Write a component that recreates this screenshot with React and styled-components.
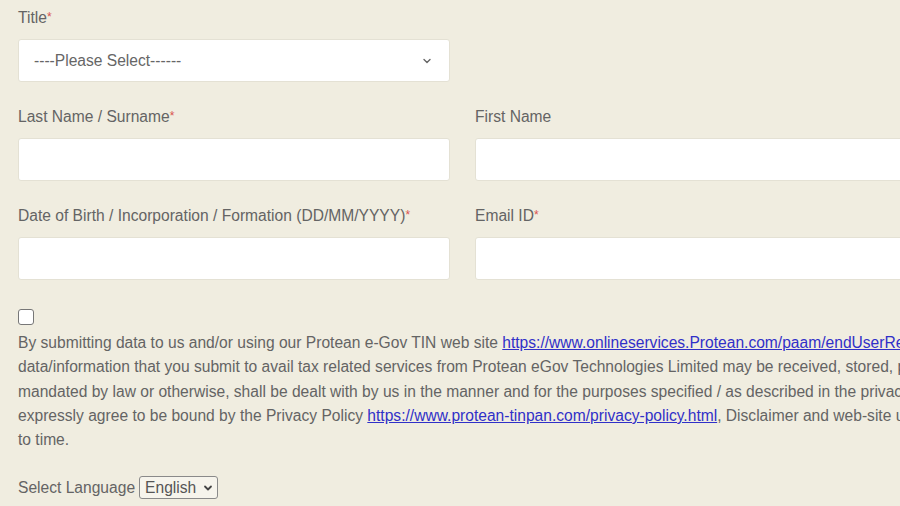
import React from "react";
import styled, { createGlobalStyle } from "styled-components";

const Global = createGlobalStyle`
  html, body { margin: 0; padding: 0; }
  body {
    background: #f0ede0;
    overflow: hidden;
    font-family: "Liberation Sans", Arial, sans-serif;
  }
`;

const Page = styled.div`
  width: 1500px;
  padding: 8px 0 0 18px;
  color: #646464;
  font-size: 15.6px;
`;

const Grid = styled.div`
  display: grid;
  grid-template-columns: 432px 432px;
  column-gap: 25px;
  row-gap: 25px;
`;

const Field = styled.div`
  display: flex;
  flex-direction: column;
`;

const Label = styled.label`
  font-size: 15.6px;
  line-height: 20px;
  color: #646464;
  margin-bottom: 11px;
  padding-top: 1px;
  margin-top: -1px;
`;

const Req = styled.span`
  color: #d9534f;
  font-size: 12px;
  vertical-align: top;
  position: relative;
  top: -1px;
`;

const Box = styled.div`
  height: 43px;
  box-sizing: border-box;
  background: #fff;
  border: 1px solid #e4e1d4;
  border-radius: 3px;
  display: flex;
  align-items: center;
  justify-content: space-between;
  padding: 0 17px 0 15px;
  color: #666;
  font-size: 15.6px;
`;

const Check = styled.div`
  width: 14px;
  height: 14px;
  border: 1px solid #777;
  border-radius: 3px;
  background: #fff;
  margin-top: 29px;
`;

const Para = styled.p`
  margin: 6px 0 0;
  font-size: 15.6px;
  line-height: 24.25px;
  white-space: nowrap;
  color: #646464;
`;

const Link = styled.a`
  color: #3030c8;
  text-decoration: underline;
`;

const LangRow = styled.div`
  margin-top: 24px;
  display: flex;
  align-items: center;
  gap: 4px;
  font-size: 15.6px;
  color: #646464;
`;

const LangSelect = styled.div`
  height: 23px;
  box-sizing: border-box;
  border: 1px solid #8a8a8a;
  border-radius: 3px;
  background: #f6f4ec;
  display: flex;
  align-items: center;
  gap: 7px;
  padding: 0 4px 0 5px;
  font-size: 15.6px;
  color: #555;
`;

const Chevron = ({ size = 10, stroke = "#777", width = 1.6 }) => (
  <svg width={size} height={size} viewBox="0 0 10 10">
    <path d="M2 3.5 L5 6.5 L8 3.5" fill="none" stroke={stroke} strokeWidth={width} strokeLinecap="round" strokeLinejoin="round" />
  </svg>
);

export default function App() {
  return (
    <>
      <Global />
      <Page>
        <Grid>
          <Field>
            <Label>Title<Req>*</Req></Label>
            <Box>
              <span>----Please Select------</span>
              <Chevron size={10} stroke="#666" width={1.4} />
            </Box>
          </Field>
          <div />
          <Field>
            <Label>Last Name / Surname<Req>*</Req></Label>
            <Box />
          </Field>
          <Field>
            <Label>First Name</Label>
            <Box />
          </Field>
          <Field>
            <Label>Date of Birth / Incorporation / Formation (DD/MM/YYYY)<Req>*</Req></Label>
            <Box />
          </Field>
          <Field>
            <Label>Email ID<Req>*</Req></Label>
            <Box />
          </Field>
        </Grid>
        <Check />
        <Para>
          By submitting data to us and/or using our Protean e-Gov TIN web site{" "}
          <Link href="#">https://www.onlineservices.Protean.com/paam/endUserRegisterContact.html</Link> you give your consent that all personal
          <br />
          data/information that you submit to avail tax related services from Protean eGov Technologies Limited may be received, stored, processed, transmitted and or made available
          <br />
          mandated by law or otherwise, shall be dealt with by us in the manner and for the purposes specified / as described in the privacy policy or as mandated by law. You also
          <br />
          expressly agree to be bound by the Privacy Policy{" "}
          <Link href="#">https://www.protean-tinpan.com/privacy-policy.html</Link>, Disclaimer and web-site usage terms as may be amended from time
          <br />
          to time.
        </Para>
        <LangRow>
          <span>Select Language</span>
          <LangSelect>
            <span>English</span>
            <Chevron size={10} stroke="#444" width={1.8} />
          </LangSelect>
        </LangRow>
      </Page>
    </>
  );
}
